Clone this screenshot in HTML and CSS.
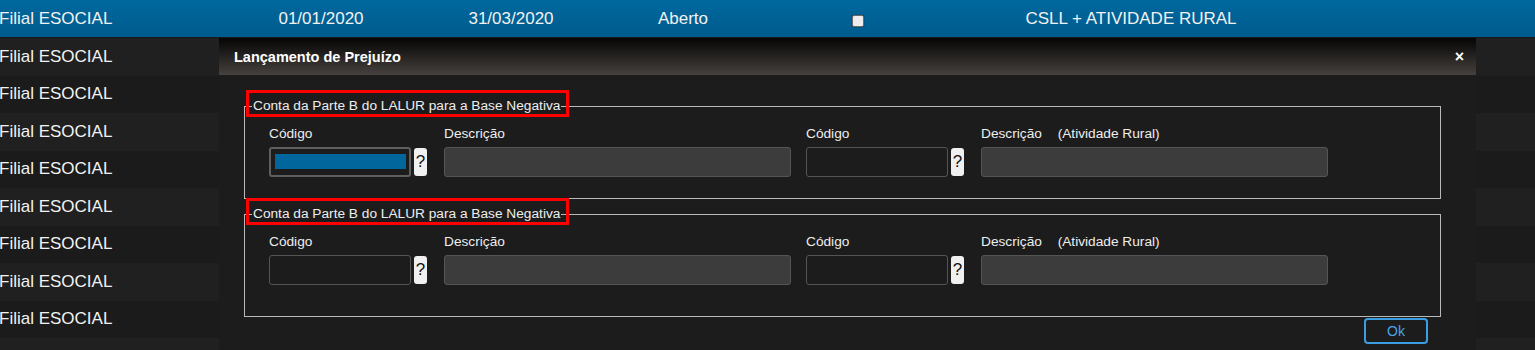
FILE: index.html
```html
<html>
    <head>
        <title>Lançamento de Prejuízo</title>
        <link rel="stylesheet" href="styles.css">
    </head>
    <body>
        <div id = 'grid'>
            <div class = 'grid-row selected'>
                <span class = 'cell first'>Filial ESOCIAL</span>
                <span class = 'cell'>01/01/2020</span>
                <span class = 'cell'>31/03/2020</span>
                <span class = 'cell'>Aberto</span>
                <span class = 'cell'><span class = 'check'></span></span>
                <span class = 'cell'>CSLL + ATIVIDADE RURAL</span>
                <span class = 'cell'></span>
            </div>
            <div class = 'grid-row'><span class = 'cell first'>Filial ESOCIAL</span></div>
            <div class = 'grid-row'><span class = 'cell first'>Filial ESOCIAL</span></div>
            <div class = 'grid-row'><span class = 'cell first'>Filial ESOCIAL</span></div>
            <div class = 'grid-row'><span class = 'cell first'>Filial ESOCIAL</span></div>
            <div class = 'grid-row'><span class = 'cell first'>Filial ESOCIAL</span></div>
            <div class = 'grid-row'><span class = 'cell first'>Filial ESOCIAL</span></div>
            <div class = 'grid-row'><span class = 'cell first'>Filial ESOCIAL</span></div>
            <div class = 'grid-row'><span class = 'cell first'>Filial ESOCIAL</span></div>
            <div class = 'grid-row'><span class = 'cell first'>Filial ESOCIAL</span></div>
        </div>

        <div id = 'dialog'>
            <div class = 'dialog-title'>
                <span>Lançamento de Prejuízo</span>
                <span class = 'close'>×</span>
            </div>
            <div class = 'dialog-body'>
                <fieldset class = 'group'>
                    <legend class = 'marked'>Conta da Parte B do LALUR para a Base Negativa</legend>
                    <div class = 'fields'>
                        <div class = 'field field-code'>
                            <label>Código</label>
                            <div class = 'lookup'>
                                <div class = 'input focused'><span class = 'sel'></span></div>
                                <button class = 'help'>?</button>
                            </div>
                        </div>
                        <div class = 'field field-desc'>
                            <label>Descrição</label>
                            <div class = 'input readonly'></div>
                        </div>
                        <div class = 'field field-code'>
                            <label>Código</label>
                            <div class = 'lookup'>
                                <div class = 'input'></div>
                                <button class = 'help'>?</button>
                            </div>
                        </div>
                        <div class = 'field field-desc'>
                            <label>Descrição <span class = 'extra'>(Atividade Rural)</span></label>
                            <div class = 'input readonly'></div>
                        </div>
                    </div>
                </fieldset>

                <fieldset class = 'group tall'>
                    <legend class = 'marked'>Conta da Parte B do LALUR para a Base Negativa</legend>
                    <div class = 'fields'>
                        <div class = 'field field-code'>
                            <label>Código</label>
                            <div class = 'lookup'>
                                <div class = 'input'></div>
                                <button class = 'help'>?</button>
                            </div>
                        </div>
                        <div class = 'field field-desc'>
                            <label>Descrição</label>
                            <div class = 'input readonly'></div>
                        </div>
                        <div class = 'field field-code'>
                            <label>Código</label>
                            <div class = 'lookup'>
                                <div class = 'input'></div>
                                <button class = 'help'>?</button>
                            </div>
                        </div>
                        <div class = 'field field-desc'>
                            <label>Descrição <span class = 'extra'>(Atividade Rural)</span></label>
                            <div class = 'input readonly'></div>
                        </div>
                    </div>
                </fieldset>

                <div class = 'actions'>
                    <button class = 'ok'>Ok</button>
                </div>
            </div>
        </div>
    </body>
</html>
```

FILE: styles.css
```css
body {
    margin : 0;
    height : 350px;
    overflow : hidden;
    position : relative;
    background : #1c1c1c;
    font-family : "Liberation Sans", Arial, sans-serif;
    color : #eee;
}

/* grid behind the dialog */
.grid-row {
    display : grid;
    grid-template-columns : 230px 182px 198px 146px 204px 342px 1fr;
    align-items : center;
    height : 37.5px;
    font-size : 17px;
    color : #f2f2f2;
    background : #1b1b1b;
}
.grid-row:nth-child(even) {
    background : #202020;
}
.grid-row.selected {
    height : 37px;
    border-bottom : 1px solid #151a1e;
    background : linear-gradient(#00689e, #005b8d);
}
.cell {
    text-align : center;
}
.cell.first {
    text-align : left;
    margin-left : -1px;
}
.check {
    display : inline-block;
    width : 10px;
    height : 10px;
    margin-top : 4px;
    background : #eee;
    border : 1px solid #6a6a6a;
    border-radius : 2px;
    box-shadow : 0 0 1px #000;
}

/* dialog */
#dialog {
    position : absolute;
    left : 219px;
    top : 38px;
    width : 1257px;
    height : 330px;
    background : #1c1c1c;
}
.dialog-title {
    height : 37px;
    display : flex;
    align-items : center;
    justify-content : space-between;
    padding : 0 12px 0 15px;
    background : linear-gradient(#050505, #46413d);
    color : #fff;
    font-size : 14.5px;
    font-weight : bold;
}
.close {
    font-size : 16px;
}
.dialog-body {
    padding : 23px 35px 0 25px;
}
.group {
    margin : 0 0 7px 0;
    padding : 12px 0 21px 7px;
    border : 1px solid #b9b9b9;
    min-width : 0;
}
.group.tall {
    margin-bottom : 1px;
    padding-bottom : 31px;
}
legend {
    padding : 0 1px;
    font-size : 13.7px;
    line-height : 16px;
    color : #eee;
}
.marked {
    position : relative;
}
.marked::before {
    content : "";
    position : absolute;
    left : -6px;
    right : -8px;
    top : -8px;
    bottom : -3px;
    border : 3px solid #ff0000;
}
.fields {
    display : flex;
    padding-left : 17px;
}
.field {
    display : flex;
    flex-direction : column;
    gap : 5px;
}
.field label {
    font-size : 13.7px;
    line-height : 16px;
    color : #eee;
}
.extra {
    margin-left : 12px;
}
.field-code {
    margin-right : 17px;
}
.field-desc {
    margin-right : 15px;
}
.lookup {
    display : flex;
}
.input {
    box-sizing : border-box;
    width : 142px;
    height : 30px;
    border : 1px solid #555;
    border-radius : 3px;
    background : #1c1c1c;
}
.input.focused {
    border : 2px solid #5e5e5e;
    padding : 5px 3px 6px 4px;
}
.sel {
    display : block;
    height : 100%;
    background : #00669b;
}
.input.readonly {
    width : 347px;
    background : #3c3c3c;
}
.help {
    box-sizing : border-box;
    width : 13px;
    height : 28px;
    margin : 1px 0 0 3px;
    padding : 0;
    border : none;
    border-radius : 3px;
    background : #f0f0f0;
    color : #111;
    font-size : 17px;
    font-family : "Liberation Sans", Arial, sans-serif;
}
.actions {
    display : flex;
    justify-content : flex-end;
    padding-right : 13px;
}
.ok {
    box-sizing : border-box;
    width : 64px;
    height : 26px;
    border : 2px solid #3b9ee2;
    border-radius : 4px;
    background : transparent;
    color : #4aa5e6;
    font-size : 14px;
    font-family : "Liberation Sans", Arial, sans-serif;
}
```
